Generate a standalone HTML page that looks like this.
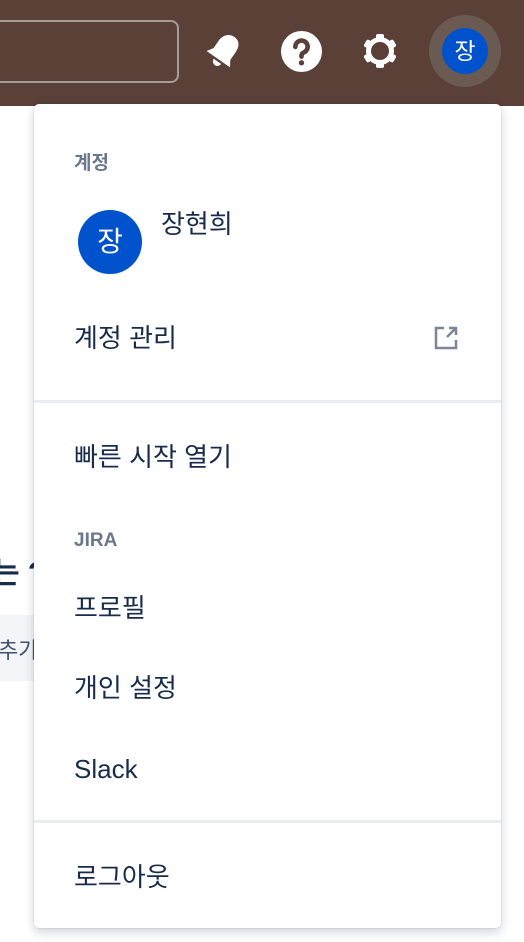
<!DOCTYPE html>
<html><head><meta charset="utf-8"><style>
body{margin:0;width:524px;height:942px;position:relative;overflow:hidden;background:#fff;font-family:"Liberation Sans","Noto Sans CJK KR",sans-serif;color:#172b4d}
.hdr{position:absolute;left:0;top:0;width:524px;height:106px;background:#5a4037}
.search{position:absolute;left:-10px;top:20px;width:185px;height:59px;border:2px solid #a89c96;border-radius:8px}
.ab{position:absolute}
.dd{position:absolute;left:34px;top:104px;width:467px;height:824px;background:#fff;border-radius:5px;box-shadow:0 4px 10px rgba(9,30,66,.2),0 0 1px rgba(9,30,66,.3)}
.t{position:absolute;left:40px;font-size:26px;line-height:30px;white-space:nowrap}
.h{position:absolute;left:40px;font-size:19px;font-weight:bold;color:#6b778c}
.div{position:absolute;left:0;width:467px;height:3px;background:#ebecf0}
</style></head><body>
<div class="hdr">
<div class="search"></div>
<svg class="ab" style="left:200px;top:28px" width="48" height="48" viewBox="0 0 42 42"><g transform="rotate(35 21 21)"><path d="M21 5c-6 0-9.5 5-9.5 10.5v8l-3.5 5.5h25l-3.5-5.5v-8C29.5 10 27 5 21 5z" fill="#fff"/><path d="M17 31a4 4 0 0 0 8 0z" fill="#fff"/></g></svg>
<svg class="ab" style="left:281px;top:31px" width="41" height="41" viewBox="0 0 40 40"><circle cx="20" cy="20" r="20" fill="#fff"/><path d="M14 15.5a6 6 0 1 1 8.5 5.3c-1.6.8-2.5 1.6-2.5 3.2v1" fill="none" stroke="#5a4037" stroke-width="4.5" stroke-linecap="round"/><circle cx="20" cy="31" r="2.6" fill="#5a4037"/></svg>
<svg class="ab" style="left:361px;top:32px" width="38" height="38" viewBox="0 0 38 38"><g fill="#fff"><circle cx="19" cy="19" r="14"/><g id="tt"><rect x="15" y="2" width="8" height="8" rx="2"/><rect x="15" y="28" width="8" height="8" rx="2"/></g><use href="#tt" transform="rotate(60 19 19)"/><use href="#tt" transform="rotate(120 19 19)"/></g><circle cx="19" cy="19" r="9" fill="#5a4037"/></svg>
<div class="ab" style="left:429px;top:15px;width:72px;height:72px;border-radius:50%;background:#6b5a52"></div>
<div class="ab" style="left:442px;top:28px;width:46px;height:46px;border-radius:50%;background:#0052cc;color:#fff;font-size:23px;line-height:46px;text-align:center">장</div>
</div>
<div class="ab" style="left:-8px;top:548px;font-size:30px;font-weight:bold;color:#172b4d">는 ?</div>
<div class="ab" style="left:0;top:615px;width:60px;height:66px;background:#f4f5f7"></div>
<div class="ab" style="left:-2px;top:633px;font-size:22px;color:#42526e">추가</div>
<div class="dd">
<div class="h" style="top:44px">계정</div>
<div class="ab" style="left:44px;top:106px;width:64px;height:64px;border-radius:50%;background:#0052cc;color:#fff;font-size:28px;line-height:64px;text-align:center">장</div>
<div class="t" style="left:127px;top:105px">장현희</div>
<div class="t" style="top:219px">계정 관리</div>
<svg class="ab" style="left:399px;top:221px" width="26" height="26" viewBox="0 0 26 26" fill="none" stroke="#7a869a" stroke-width="2.5"><path d="M11 3H3v20h20v-8"/><path d="M14 12L23 3M16 3h7v7"/></svg>
<div class="div" style="top:296px"></div>
<div class="t" style="top:338px">빠른 시작 열기</div>
<div class="h" style="top:426px">JIRA</div>
<div class="t" style="top:489px">프로필</div>
<div class="t" style="top:569px">개인 설정</div>
<div class="t" style="top:650px">Slack</div>
<div class="div" style="top:716px"></div>
<div class="t" style="top:758px">로그아웃</div>
</div>
</body></html>
